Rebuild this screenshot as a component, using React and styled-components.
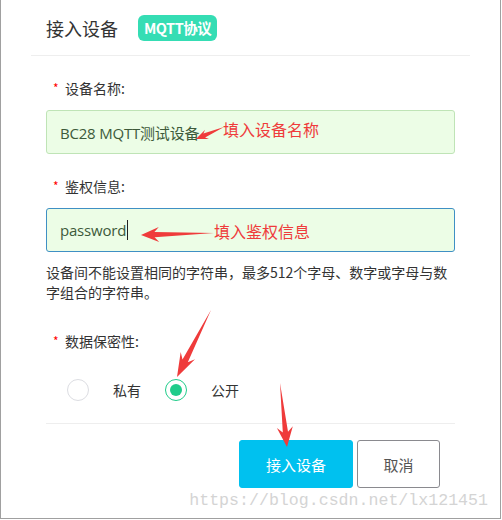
import React from 'react';
import styled, { createGlobalStyle } from 'styled-components';

const GlobalStyle = createGlobalStyle`
  html, body {
    margin: 0;
    padding: 0;
    background: #fff;
  }
  body {
    font-family: "Noto Sans", "Noto Sans CJK SC", sans-serif;
    color: #333;
  }
`;

const Dialog = styled.div`
  position: relative;
  box-sizing: border-box;
  width: 501px;
  height: 519px;
  background: #fff;
  border: 1px solid #a0a0a0;
  border-top: none;
  overflow: hidden;
`;

const Header = styled.div`
  display: flex;
  align-items: center;
  gap: 20px;
  height: 55px;
  margin: 0 30px;
  padding: 0 15px;
  border-bottom: 1px solid #eeeeee;
`;

const Title = styled.h2`
  margin: 0;
  font-size: 18px;
  font-weight: 400;
  color: #333;
  font-family: "Noto Sans CJK SC", sans-serif;
`;

const Badge = styled.span`
  display: inline-flex;
  align-items: center;
  height: 26px;
  padding: 0 6px;
  border-radius: 6px;
  background: #35ddb4;
  color: #fff;
  font-size: 14.5px;
  font-weight: 700;
  font-family: "Noto Sans CJK SC", sans-serif;
  letter-spacing: -0.5px;
`;

const Body = styled.div`
  padding: 0 45px;
  display: flex;
  flex-direction: column;
`;

const Label = styled.label`
  display: flex;
  align-items: center;
  gap: 7px;
  height: 20px;
  line-height: 20px;
  margin-top: ${(p) => p.$top}px;
  padding-left: 7px;
  font-size: 14px;
  color: #333;
  font-family: "Noto Sans CJK SC", sans-serif;
  &::before {
    content: '*';
    color: #f00;
    font-size: 12px;
    width: 5px;
  }
`;

const Field = styled.div`
  display: flex;
  align-items: center;
  box-sizing: border-box;
  height: 44px;
  margin-top: 12px;
  padding: 0 13px;
  background: #ecfde6;
  border: 1px solid ${(p) => (p.$focus ? '#3f90c4' : '#bfe4b6')};
  border-radius: 3px;
  font-size: 15px;
  letter-spacing: -0.2px;
  color: #3d5a3a;
  font-family: "Open Sans", "Noto Sans CJK SC", sans-serif;
`;

const Caret = styled.span`
  display: inline-block;
  width: 1px;
  height: 20px;
  margin-left: 1px;
  background: #222;
`;

const Help = styled.p`
  margin: 10px 0 0;
  font-size: 14px;
  line-height: 20px;
  color: #333;
  font-family: "Noto Sans CJK SC", sans-serif;
`;

const RadioRow = styled.div`
  display: flex;
  align-items: center;
  margin-top: 28px;
  padding-left: 21px;
  height: 22px;
`;

const Radio = styled.span`
  box-sizing: border-box;
  width: 22px;
  height: 22px;
  border-radius: 50%;
  border: 1px solid ${(p) => (p.$checked ? '#1fcc8a' : '#dcdde2')};
  display: flex;
  align-items: center;
  justify-content: center;
  &::after {
    content: '';
    display: ${(p) => (p.$checked ? 'block' : 'none')};
    width: 12px;
    height: 12px;
    border-radius: 50%;
    background: #1fcc8a;
  }
`;

const RadioText = styled.span`
  margin-left: 24px;
  margin-right: 24px;
  font-size: 14px;
  line-height: 20px;
  color: #333;
  font-family: "Noto Sans CJK SC", sans-serif;
`;

const Footer = styled.div`
  display: flex;
  justify-content: flex-end;
  gap: 4px;
  margin-top: 22px;
  padding-top: 16px;
  padding-right: 15px;
  border-top: 1px solid #eeeeee;
`;

const Button = styled.button`
  box-sizing: border-box;
  height: 48px;
  width: ${(p) => (p.$primary ? '114px' : '83px')};
  border-radius: 3px;
  border: 1px solid ${(p) => (p.$primary ? '#00c1ef' : '#8a8a8f')};
  background: ${(p) => (p.$primary ? '#00c1ef' : '#fff')};
  color: ${(p) => (p.$primary ? '#fff' : '#555')};
  font-size: 15px;
  font-family: "Noto Sans CJK SC", sans-serif;
`;

const Watermark = styled.div`
  position: absolute;
  right: 12px;
  bottom: 8px;
  font-family: "Liberation Mono", monospace;
  font-size: 16.6px;
  color: #d4d4d4;
`;

const Overlay = styled.svg`
  position: absolute;
  left: 0;
  top: 0;
  pointer-events: none;
`;

const Note = styled.text`
  font-family: "Noto Sans CJK SC", sans-serif;
  font-size: 16px;
  fill: #ef3b3b;
`;

// tapered annotation arrow: thin tail, wide head
function arrow(tx, ty, hx, hy, headLen, headW, shaft) {
  const dx = hx - tx;
  const dy = hy - ty;
  const len = Math.hypot(dx, dy);
  const ux = dx / len;
  const uy = dy / len;
  const nx = -uy;
  const ny = ux;
  const bx = hx - ux * headLen;
  const by = hy - uy * headLen;
  const nbx = hx - ux * headLen * 0.75;
  const nby = hy - uy * headLen * 0.75;
  const pts = [
    [tx, ty],
    [nbx + nx * shaft, nby + ny * shaft],
    [bx + nx * headW, by + ny * headW],
    [hx, hy],
    [bx - nx * headW, by - ny * headW],
    [nbx - nx * shaft, nby - ny * shaft],
  ];
  return pts.map((p) => p.map((v) => v.toFixed(1)).join(',')).join(' ');
}

export default function App() {
  return (
    <>
      <GlobalStyle />
      <Dialog>
        <Header>
          <Title>接入设备</Title>
          <Badge>MQTT协议</Badge>
        </Header>
        <Body>
          <Label $top={22}>设备名称:</Label>
          <Field>BC28 MQTT测试设备</Field>
          <Label $top={22}>鉴权信息:</Label>
          <Field $focus>
            password<Caret />
          </Field>
          <Help>设备间不能设置相同的字符串，最多512个字母、数字或字母与数字组合的字符串。</Help>
          <Label $top={29}>数据保密性:</Label>
          <RadioRow>
            <Radio />
            <RadioText>私有</RadioText>
            <Radio $checked />
            <RadioText>公开</RadioText>
          </RadioRow>
          <Footer>
            <Button $primary>接入设备</Button>
            <Button>取消</Button>
          </Footer>
        </Body>
        <Watermark>https://blog.csdn.net/lx121451</Watermark>
        <Overlay width="501" height="519" viewBox="0 0 501 519">
          <g fill="#ef3b3b">
            <polygon points={arrow(223, 127, 195, 139, 12, 5, 2.2)} />
            <polygon points={arrow(213, 233, 140, 235, 18, 7.5, 2.6)} />
            <polygon points={arrow(210, 310, 176, 377, 24, 8, 3)} />
            <polygon points={arrow(279, 383, 286, 447, 20, 8, 2.6)} />
          </g>
          <Note x="222" y="136">填入设备名称</Note>
          <Note x="213" y="238">填入鉴权信息</Note>
        </Overlay>
      </Dialog>
    </>
  );
}
